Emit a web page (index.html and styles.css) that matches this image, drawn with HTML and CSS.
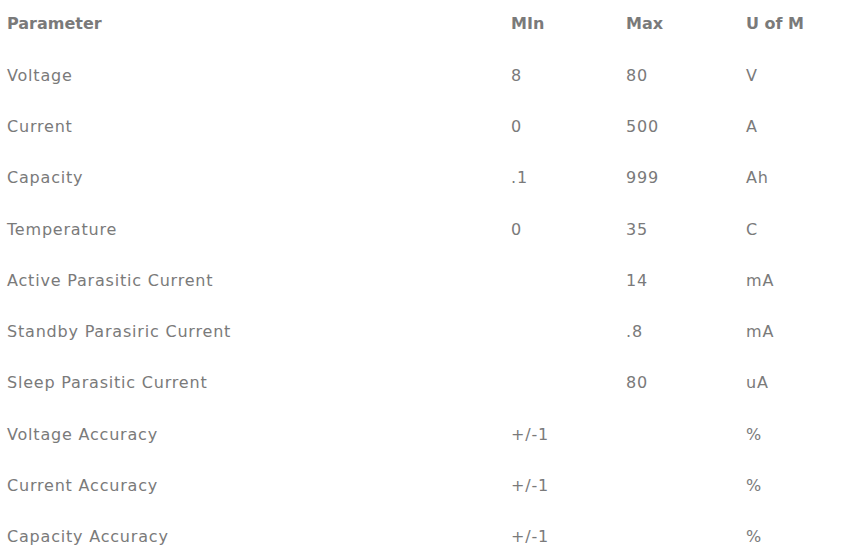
FILE: index.html
```html
<!DOCTYPE html>
<html>
<head>
<meta charset="utf-8">
<link rel="stylesheet" href="styles.css">
</head>
<body>
<table class="spec">
  <thead>
    <tr><th class="c1">Parameter</th><th class="c2">MIn</th><th class="c3">Max</th><th class="c4">U of M</th></tr>
  </thead>
  <tbody>
    <tr><td>Voltage</td><td>8</td><td>80</td><td>V</td></tr>
    <tr><td>Current</td><td>0</td><td>500</td><td>A</td></tr>
    <tr><td>Capacity</td><td>.1</td><td>999</td><td>Ah</td></tr>
    <tr><td>Temperature</td><td>0</td><td>35</td><td>C</td></tr>
    <tr><td>Active Parasitic Current</td><td></td><td>14</td><td>mA</td></tr>
    <tr><td>Standby Parasiric Current</td><td></td><td>.8</td><td>mA</td></tr>
    <tr><td>Sleep Parasitic Current</td><td></td><td>80</td><td>uA</td></tr>
    <tr><td>Voltage Accuracy</td><td>+/-1</td><td></td><td>%</td></tr>
    <tr><td>Current Accuracy</td><td>+/-1</td><td></td><td>%</td></tr>
    <tr><td>Capacity Accuracy</td><td>+/-1</td><td></td><td>%</td></tr>
  </tbody>
</table>
</body>
</html>
```
FILE: styles.css
```css
html, body {
  margin: 0;
  padding: 0;
  background: #ffffff;
}
body {
  font-family: "DejaVu Sans", "Liberation Sans", sans-serif;
  font-size: 16px;
  color: #7a7a7a;
}
.spec {
  border-collapse: collapse;
  margin-left: 7px;
  table-layout: fixed;
  width: 861px;
}
.spec th, .spec td {
  text-align: left;
  padding: 12px 0;
  line-height: 27.3px;
  white-space: nowrap;
}
.spec td {
  letter-spacing: 0.8px;
}
.spec th {
  font-weight: 700;
  padding-top: 10.35px;
}
.c1 { width: 504px; }
.c2 { width: 115px; }
.c3 { width: 120px; }
```
